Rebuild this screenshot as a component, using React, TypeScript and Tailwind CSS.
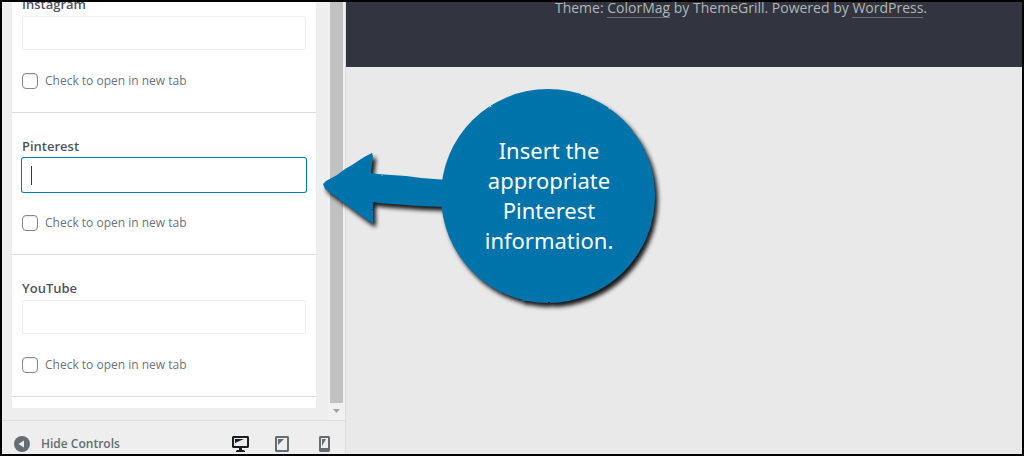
import { ReactNode } from "react";

type SocialFieldProps = {
  id: string;
  label: string;
  focused?: boolean;
};

const SocialField: React.FC<SocialFieldProps> = ({ id, label, focused }) => {
  return (
    <div className="border-b border-[#dddddd] px-[10px] py-[23px]">
      <label
        htmlFor={id}
        className="mb-[2px] block text-[13px] leading-[20px] font-semibold text-[#50545a]"
      >
        {label}
      </label>
      <div className="relative">
        <input
          id={id}
          type="text"
          className={
            focused
              ? "block h-[34px] w-full rounded-[2px] bg-white px-2 caret-transparent outline-none ring-1 ring-[#007cba]"
              : "block h-[34px] w-full rounded-[2px] border border-[#eeeeee] bg-white px-2 outline-none"
          }
        />
        {focused && (
          <span className="absolute top-2 left-[9px] h-[19px] w-px bg-[#32373c]" />
        )}
      </div>
      <label className="mt-[23px] flex h-4 items-center gap-[7px] text-[12px] text-[#6b737b]">
        <input
          type="checkbox"
          className="size-4 appearance-none rounded-[4px] border border-[#7e8993] bg-white shadow-[inset_0_1px_2px_rgba(0,0,0,0.1)]"
        />
        Check to open in new tab
      </label>
    </div>
  );
};

type DeviceButtonProps = {
  label: string;
  children: ReactNode;
};

const DeviceButton: React.FC<DeviceButtonProps> = ({ label, children }) => {
  return (
    <button type="button" aria-label={label} className="flex w-[42px] justify-center">
      {children}
    </button>
  );
};

const DesktopIcon = () => (
  <svg width="17" height="16" viewBox="0 0 17 16">
    <path
      fill="#191e23"
      fillRule="evenodd"
      d="M1 0h15l1 1v10l-1 1h-6v2h2l1 1v1H4v-1l1-1h2v-2H1l-1-1V1zM2 2v8h13V2z"
    />
    <path fill="#191e23" d="M3 3h9L3 7z" />
  </svg>
);

const TabletIcon = () => (
  <svg width="14" height="16" viewBox="0 0 14 16">
    <path
      fill="#656c72"
      fillRule="evenodd"
      d="M1 0h12l1 1v14l-1 1H1l-1-1V1zM2 2v12h10V2z"
    />
    <path fill="#656c72" d="M3 3h6L3 9z" />
  </svg>
);

const PhoneIcon = () => (
  <svg width="11" height="16" viewBox="0 0 11 16">
    <path
      fill="#656c72"
      fillRule="evenodd"
      d="M1 0h9l1 1v14l-1 1H1l-1-1V1zM2 2v10h7V2z"
    />
    <path fill="#656c72" d="M3 3h4L3 10z" />
  </svg>
);

const Sidebar = () => {
  return (
    <aside className="flex w-[344px] shrink-0 flex-col border-r border-[#dddddd] bg-[#eeeeee]">
      <div className="flex min-h-0 flex-1">
        <div className="flex min-w-0 flex-1 flex-col justify-end overflow-hidden pr-3 pb-3 pl-[10px]">
          <form className="bg-white pb-[11px]">
            <SocialField id="instagram" label="Instagram" />
            <SocialField id="pinterest" label="Pinterest" focused />
            <SocialField id="youtube" label="YouTube" />
          </form>
        </div>
        <div className="flex w-[17px] flex-col items-center bg-[#f1f1f1]">
          <div className="w-[13px] flex-1 bg-[#c1c1c1]" />
          <svg width="7" height="17" viewBox="0 0 7 17">
            <path d="M0 6h7L3.500 10z" fill="#a3a3a3" />
          </svg>
        </div>
      </div>
      <footer className="flex h-[34px] items-end justify-between border-t border-[#dddddd] pb-[2px] pl-3">
        <button
          type="button"
          className="flex h-4 items-center gap-[11px] text-[12px] font-semibold text-[#656c72]"
        >
          <svg width="16" height="16" viewBox="0 0 16 16">
            <circle cx="8" cy="8" r="8" fill="#656c72" />
            <path d="M10 4.500v7L4.500 8z" fill="#eeeeee" />
          </svg>
          Hide Controls
        </button>
        <div className="flex">
          <DeviceButton label="Desktop preview">
            <DesktopIcon />
          </DeviceButton>
          <DeviceButton label="Tablet preview">
            <TabletIcon />
          </DeviceButton>
          <DeviceButton label="Mobile preview">
            <PhoneIcon />
          </DeviceButton>
        </div>
      </footer>
    </aside>
  );
};

const Preview = () => {
  return (
    <main className="min-w-0 flex-1 bg-[#e9e9e9]">
      <div className="flex h-[65px] justify-center bg-[#32353f] pl-[114px]">
        <p className="-mt-[3px] text-[14px] leading-[18px] whitespace-nowrap text-[#b1b6b6]">
          Theme:{" "}
          <a href="#colormag" className="inline-block border-b border-[#6c6f76]">
            ColorMag
          </a>{" "}
          by ThemeGrill. Powered by{" "}
          <a href="#wordpress" className="inline-block border-b border-[#6c6f76]">
            WordPress
          </a>
          .
        </p>
      </div>
    </main>
  );
};

const Callout = () => {
  return (
    <div className="pointer-events-none absolute top-[78px] left-[310px] h-[240px] w-[360px]">
      <svg
        viewBox="0 0 360 240"
        className="absolute inset-0 size-full drop-shadow-[3px_4px_2px_rgba(0,0,0,0.9)]"
      >
        <filter id="rough">
          <feTurbulence type="fractalNoise" baseFrequency="0.12" numOctaves="1" />
          <feDisplacementMap
            in="SourceGraphic"
            scale="2"
            xChannelSelector="R"
            yChannelSelector="G"
          />
        </filter>
        <g fill="#0073aa" filter="url(#rough)">
          <path d="M11 104l3-3 11-6 8-6 7-4 9-6 5-3 6-3 1 3-2 17 6 1 14 1 15 1 15 2 26 2v27l-28-1-13-1-15-1-12-1-6-1 0 21-3-1-15-11-16-12-14-10z" />
          <circle cx="236" cy="116" r="107" />
        </g>
      </svg>
      <p className="absolute top-[55px] left-[130px] w-[214px] text-center font-['Noto_Sans','Open_Sans',sans-serif] text-[22px] leading-[30px] text-white">
        Insert the
        <br />
        appropriate
        <br />
        Pinterest
        <br />
        information.
      </p>
    </div>
  );
};

export default function App() {
  return (
    <div className="relative flex h-screen overflow-hidden border-2 border-black font-['Open_Sans','Noto_Sans',sans-serif]">
      <Sidebar />
      <Preview />
      <Callout />
    </div>
  );
}
